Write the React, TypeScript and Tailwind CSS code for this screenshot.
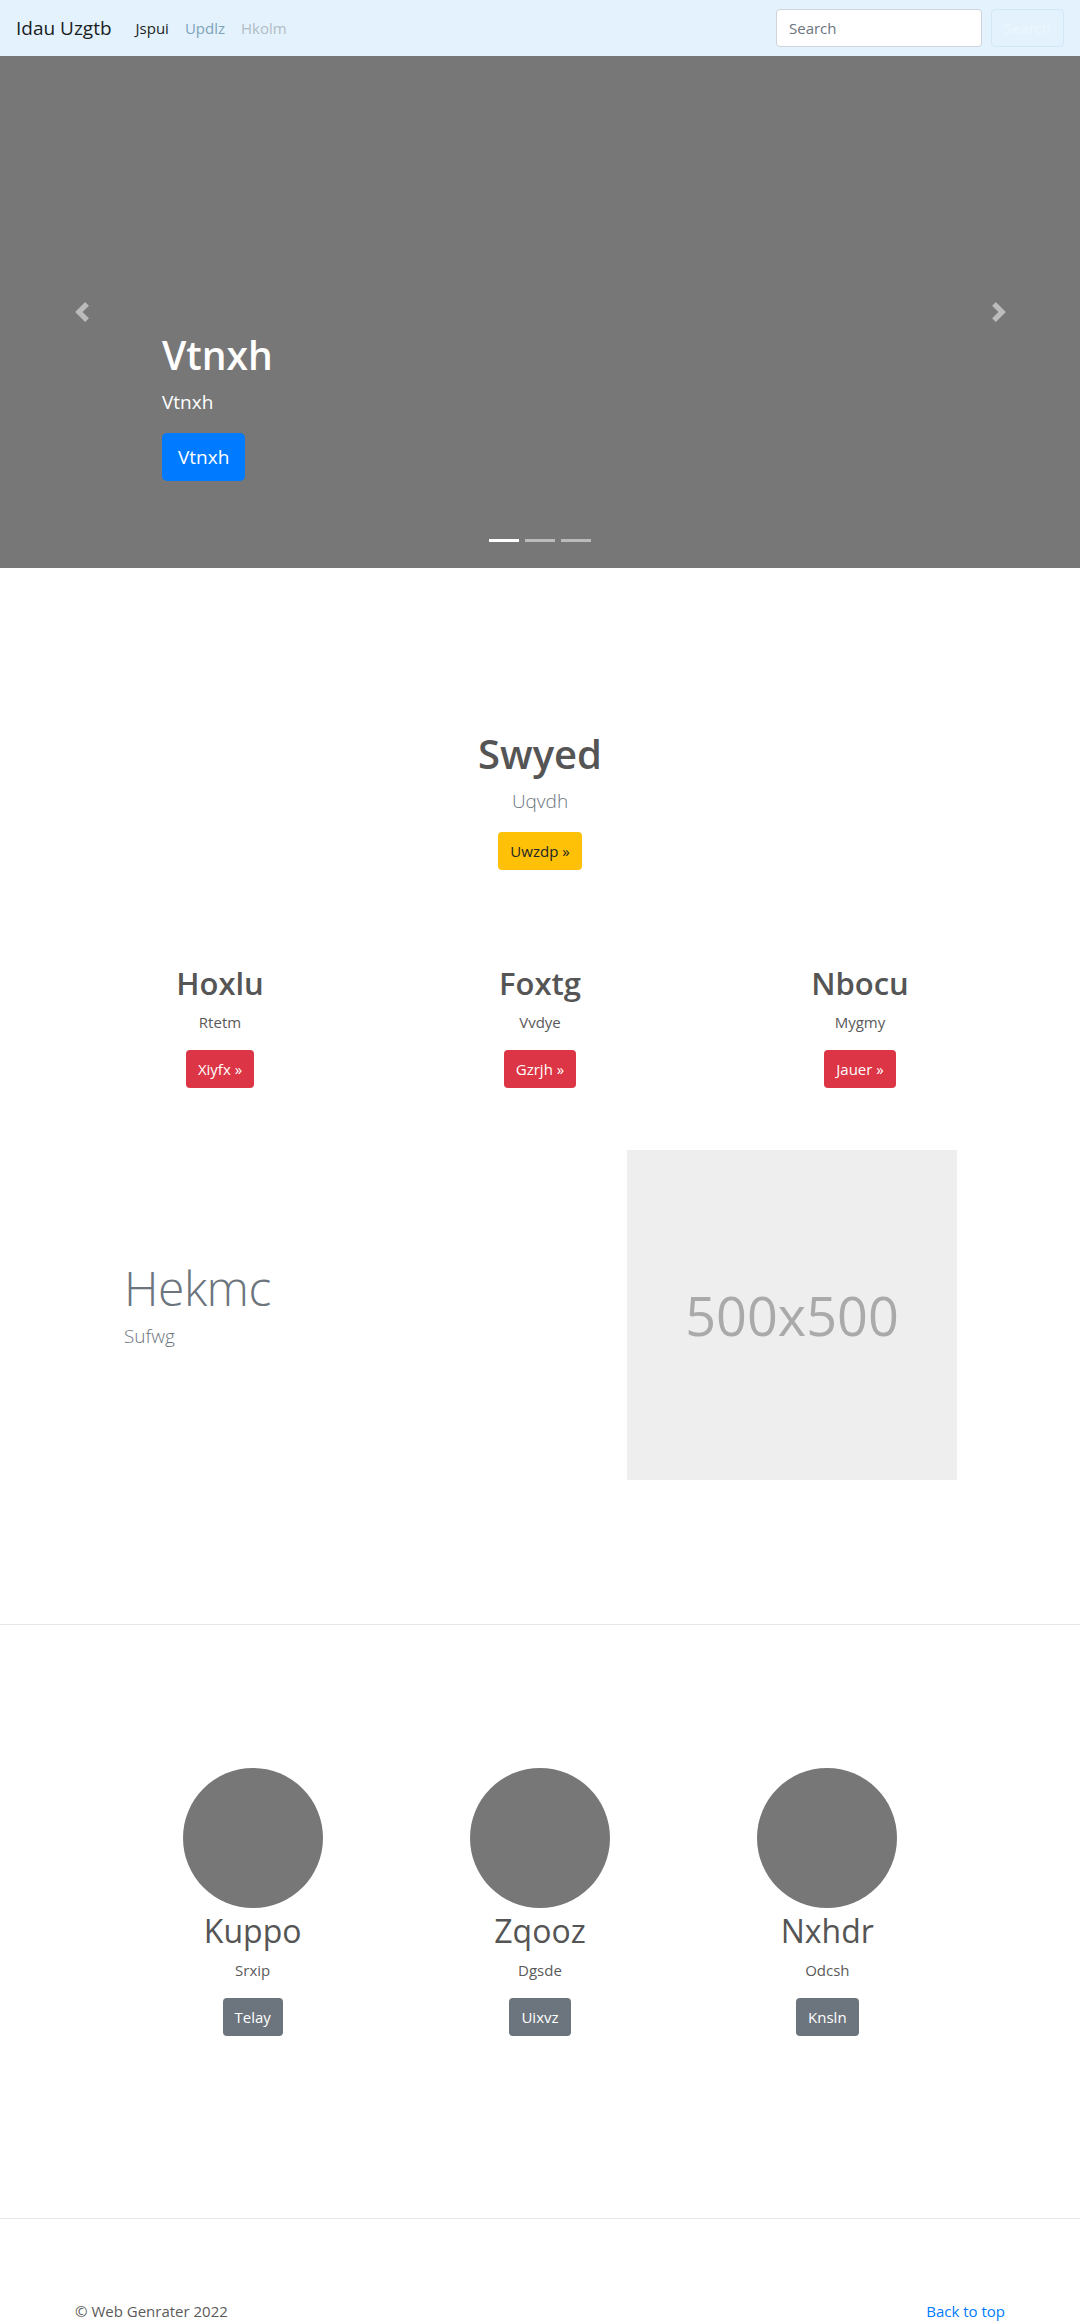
import React from "react";

function Chevron({ dir }: { dir: "left" | "right" }) {
  return (
    <svg width="20" height="20" viewBox="0 0 8 8" className="opacity-50">
      {dir === "left" ? (
        <path fill="#fff" d="M5.25 0l-4 4 4 4 1.5-1.5L4.25 4l2.5-2.5L5.25 0z" />
      ) : (
        <path fill="#fff" d="M2.75 0l-1.5 1.5L3.75 4l-2.5 2.5L2.75 8l4-4-4-4z" />
      )}
    </svg>
  );
}

export default function App() {
  const cols = [
    { h: "Hoxlu", p: "Rtetm", b: "Xiyfx »" },
    { h: "Foxtg", p: "Vvdye", b: "Gzrjh »" },
    { h: "Nbocu", p: "Mygmy", b: "Jauer »" },
  ];
  const people = [
    { h: "Kuppo", p: "Srxip", b: "Telay" },
    { h: "Zqooz", p: "Dgsde", b: "Uixvz" },
    { h: "Nxhdr", p: "Odcsh", b: "Knsln" },
  ];
  return (
    <div className="min-h-screen bg-white text-[16px] leading-[1.5] text-[#5a5a5a] font-['Open_Sans',sans-serif]">
      {/* Navbar */}
      <nav className="h-[56px] bg-[#e3f2fd] flex items-center px-4">
        <span className="text-[19px] text-[#1a1d1f] mr-4">Idau Uzgtb</span>
        <span className="px-2 text-[#1c1f21] text-[15px]">Jspui</span>
        <span className="px-2 text-[#7ea3b8] text-[15px]">Updlz</span>
        <span className="px-2 text-[#b3bcc4] text-[15px]">Hkolm</span>
        <div className="ml-auto flex items-center">
          <div className="w-[206px] h-[38px] bg-white border border-[#ced4da] rounded-[4px] px-3 flex items-center text-[#6c757d] text-[15px]">
            Search
          </div>
          <div className="ml-[9px] w-[73px] h-[38px] border border-[#d3e8f6] rounded-[4px] flex items-center justify-center text-[#eef7fd] text-[15px]">
            Search
          </div>
        </div>
      </nav>

      {/* Hero carousel */}
      <section className="relative h-[512px] bg-[#777777]">
        <div className="absolute left-[72px] top-[246px]">
          <Chevron dir="left" />
        </div>
        <div className="absolute left-[989px] top-[246px]">
          <Chevron dir="right" />
        </div>
        <div className="absolute left-[162px] bottom-[67px] pb-[20px] text-white">
          <h1 className="text-[39px] leading-[48px] font-semibold mb-2">Vtnxh</h1>
          <p className="text-[19px] leading-[30px] font-medium mb-4">Vtnxh</p>
          <div className="inline-flex items-center h-[48px] px-4 bg-[#007bff] rounded-[5px] text-[19px] font-medium">
            Vtnxh
          </div>
        </div>
        <div className="absolute left-0 right-0 bottom-[26px] flex justify-center gap-[6px]">
          <div className="w-[30px] h-[3px] bg-white" />
          <div className="w-[30px] h-[3px] bg-white/50" />
          <div className="w-[30px] h-[3px] bg-white/50" />
        </div>
      </section>

      {/* Intro */}
      <section className="pt-[162px] flex flex-col items-center text-center">
        <h1 className="text-[40px] leading-[48px] font-semibold text-[#555555] mb-2">Swyed</h1>
        <p className="text-[19px] leading-[30px] font-light text-[#6c757d] mb-4">Uqvdh</p>
        <div className="h-[38px] px-3 flex items-center bg-[#ffc107] rounded-[4px] text-[#212529] text-[15px]">
          Uwzdp »
        </div>
      </section>

      {/* Three columns */}
      <section className="w-[960px] mx-auto grid grid-cols-3 mt-[94px]">
        {cols.map((c) => (
          <div key={c.h} className="flex flex-col items-center text-center">
            <h2 className="text-[31px] leading-[38px] font-semibold text-[#555555] mb-2">{c.h}</h2>
            <p className="text-[15px] leading-[24px] mb-4">{c.p}</p>
            <div className="h-[38px] px-3 flex items-center bg-[#dc3545] rounded-[4px] text-white text-[15px]">
              {c.b}
            </div>
          </div>
        ))}
      </section>

      {/* Featurette */}
      <section className="w-[960px] mx-auto flex items-center mt-[62px]">
        <div className="w-[480px] pl-[64px]">
          <h2 className="text-[48px] leading-[50px] font-light text-[#6c757d] mb-2 tracking-[-0.5px]">Hekmc</h2>
          <p className="text-[19px] leading-[30px] font-light text-[#6c757d] mb-4">Sufwg</p>
        </div>
        <div className="ml-[87px] w-[330px] h-[330px] bg-[#eeeeee] flex items-center justify-center text-[#aaaaaa] text-[54px]">
          500x500
        </div>
      </section>

      <hr className="mt-[144px] border-0 border-t border-[#e6e6e6]" />

      {/* People */}
      <section className="w-[862px] mx-auto grid grid-cols-3 mt-[143px]">
        {people.map((c) => (
          <div key={c.h} className="flex flex-col items-center text-center">
            <div className="w-[140px] h-[140px] rounded-full bg-[#777777]" />
            <h2 className="mt-[4px] text-[32px] leading-[38px] font-normal text-[#555555] mb-2">{c.h}</h2>
            <p className="text-[15px] leading-[24px] mb-4">{c.p}</p>
            <div className="h-[38px] px-3 flex items-center bg-[#6c757d] rounded-[4px] text-white text-[15px]">
              {c.b}
            </div>
          </div>
        ))}
      </section>

      <hr className="mt-[182px] border-0 border-t border-[#e6e6e6]" />

      <footer className="w-[930px] mx-auto flex justify-between pt-[80px] pb-[40px] text-[15px] leading-[24px]">
        <p className="text-[#5a5a5a]">© Web Genrater 2022</p>
        <p className="text-[#007bff]">Back to top</p>
      </footer>
    </div>
  );
}
